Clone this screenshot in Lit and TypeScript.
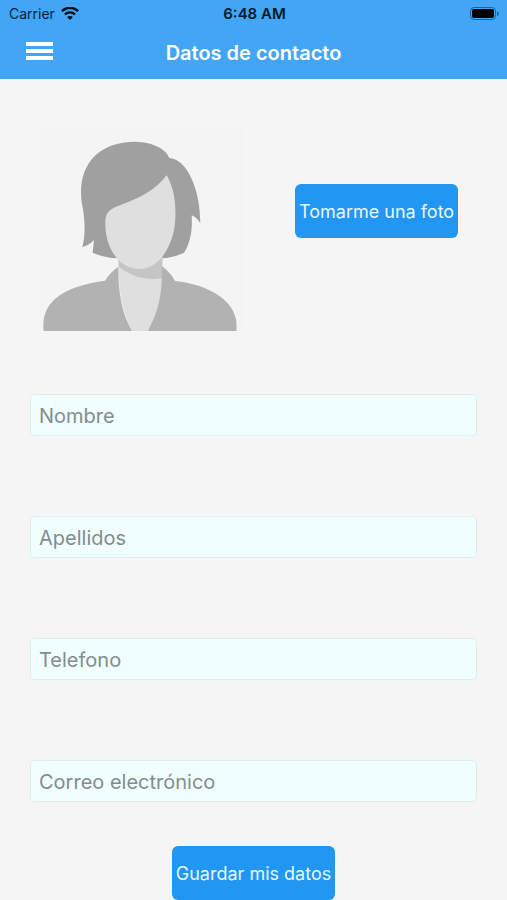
import { LitElement, html, css } from "lit";
import { customElement } from "lit/decorators.js";

interface Field {
  id: string;
  label: string;
  type: string;
}

const FIELDS: Field[] = [
  { id: "nombre", label: "Nombre", type: "text" },
  { id: "apellidos", label: "Apellidos", type: "text" },
  { id: "telefono", label: "Telefono", type: "tel" },
  { id: "correo", label: "Correo electrónico", type: "email" },
];

@customElement("status-bar")
class StatusBar extends LitElement {
  static styles = css`
    :host {
      display: grid;
      grid-template-columns: 1fr auto 1fr;
      align-items: center;
      height: 26px;
      padding: 1px 7px 0 9px;
      box-sizing: border-box;
      font-size: 14px;
      line-height: 18px;
      color: #06223a;
    }
    .carrier {
      display: flex;
      align-items: center;
      gap: 6px;
    }
    .time {
      font-size: 15px;
      font-weight: 600;
      color: #04182a;
    }
    .battery {
      justify-self: end;
    }
    svg {
      display: block;
    }
  `;

  render() {
    return html`
      <div class="carrier">
        <span>Carrier</span>
        <svg width="18" height="14" viewBox="0 0 18 14" fill="none" stroke="#04101c" aria-hidden="true">
          <path d="M0.9 4.2C5.4 -0.3 12.6 -0.3 17.1 4.2" stroke-width="2.5" />
          <path d="M3.9 7.5C6.8 4.7 11.2 4.7 14.1 7.5" stroke-width="2.4" />
          <path d="M9 13L6.1 10.1C7.7 8.6 10.3 8.6 11.9 10.1Z" fill="#04101c" stroke="none" />
        </svg>
      </div>
      <span class="time">6:48 AM</span>
      <svg class="battery" width="31" height="14" viewBox="0 0 31 14" aria-hidden="true">
        <rect x="1.5" y="0.5" width="25" height="12" rx="3.5" fill="none" stroke="#25618f" />
        <rect x="3" y="2" width="22" height="9" rx="2" fill="#000" />
        <path d="M28 4.5C30.4 5 30.4 8.5 28 9Z" fill="#25618f" />
      </svg>
    `;
  }
}

@customElement("contact-avatar")
class ContactAvatar extends LitElement {
  static styles = css`
    :host,
    svg {
      display: block;
    }
  `;

  render() {
    return html`
      <svg width="230" height="240" viewBox="0 -72 690 720" role="img" aria-label="Foto de contacto">
        <rect x="36" y="36" width="620" height="612" fill="#f4f4f4" />
        <path
          fill="#a0a0a0"
          d="M172 396C184 350 178 300 170 262C157 160 210 80 332 80C382 81 424 102 433 129C482 131 526 215 526 325C519 313 510 305 500 301C503 345 496 385 477 413C455 424 432 429 410 430H278C250 429 225 423 203 413L207 375C197 387 185 392 172 396Z"
        />
        <path fill="#dfdfdf" d="M280 425H412V480C411 550 394 607 367 648H322C291 590 279 520 280 425Z" />
        <path fill="#c5c5c5" d="M281 430H412V489C350 500 309 478 281 454Z" />
        <path
          fill="#dfdfdf"
          d="M241 322C240 288 262 280 292 268C346 247 388 228 425 181C446 217 453 260 451 310C448 388 405 462 343 462C279 461 240 396 241 322Z"
        />
        <path
          fill="#b2b2b2"
          d="M280 455C279 530 291 596 321 648H57C49 587 77 519 240 497C250 480 265 465 280 455Z"
        />
        <path
          fill="#b2b2b2"
          d="M411 454C427 465 440 480 450 498C545 507 647 557 634 648H368C402 589 412 532 411 454Z"
        />
      </svg>
    `;
  }
}

@customElement("app-root")
class AppRoot extends LitElement {
  static styles = css`
    :host {
      display: block;
      min-height: 100vh;
      background: #f5f5f5;
      font-family: Inter, "Liberation Sans", sans-serif;
    }
    header {
      background: #42a5f5;
    }
    .toolbar {
      display: grid;
      grid-template-columns: 28px 1fr 28px;
      align-items: center;
      height: 53px;
      padding: 0 25px;
    }
    .menu {
      display: flex;
      flex-direction: column;
      gap: 3px;
      padding: 0 0 4px 1px;
      border: 0;
      background: none;
      cursor: pointer;
    }
    .bar {
      height: 4px;
      width: 27px;
      background: #fff;
    }
    h1 {
      margin: 0;
      font-size: 20px;
      line-height: 24px;
      font-weight: 600;
      text-align: center;
      color: #fff;
    }
    .photo {
      display: flex;
      align-items: center;
      gap: 40px;
      padding: 12px 25px 0;
    }
    .action {
      height: 54px;
      padding: 2px 4px 0;
      border: 0;
      border-radius: 6px;
      background: #2196f3;
      color: #e8f8ff;
      font: 400 18px/24px Inter, "Liberation Sans", sans-serif;
      white-space: nowrap;
      cursor: pointer;
    }
    form {
      display: flex;
      flex-direction: column;
      align-items: center;
      padding: 63px 30px 0;
    }
    .fields {
      display: grid;
      gap: 80px;
      width: 100%;
      margin-bottom: 44px;
    }
    input {
      width: 100%;
      height: 42px;
      box-sizing: border-box;
      padding: 2px 8px 0;
      border: 1px solid #dcefed;
      border-radius: 5px;
      background: #f0ffff;
      color: #333;
      font: 400 20px/24px Inter, "Liberation Sans", sans-serif;
    }
    input::placeholder {
      color: #858b8b;
      opacity: 1;
    }
  `;

  render() {
    return html`
      <header>
        <status-bar></status-bar>
        <div class="toolbar">
          <button class="menu" type="button" aria-label="Menú">
            <span class="bar"></span><span class="bar"></span><span class="bar"></span>
          </button>
          <h1>Datos de contacto</h1>
        </div>
      </header>
      <main>
        <section class="photo">
          <contact-avatar></contact-avatar>
          <button class="action" type="button">Tomarme una foto</button>
        </section>
        <form>
          <div class="fields">
            ${FIELDS.map(
              (f) => html`<input id=${f.id} name=${f.id} type=${f.type} placeholder=${f.label} aria-label=${f.label} />`
            )}
          </div>
          <button class="action" type="button">Guardar mis datos</button>
        </form>
      </main>
    `;
  }
}
